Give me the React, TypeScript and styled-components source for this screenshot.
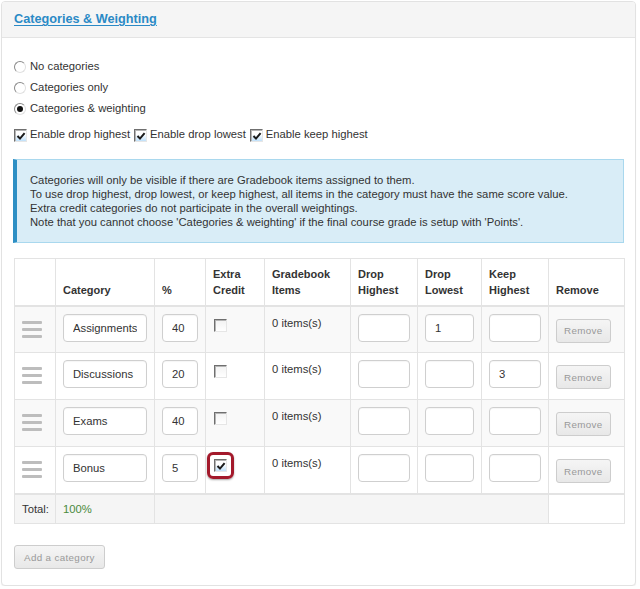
import React from "react";
import styled, { createGlobalStyle } from "styled-components";

const Global = createGlobalStyle`
  html, body { margin: 0; padding: 0; background: #fff; }
  body {
    font-family: "Liberation Sans", Arial, Helvetica, sans-serif;
    font-size: 11.25px;
    color: #333;
  }
  * { box-sizing: border-box; }
`;

const Page = styled.div`
  padding: 1px 4px 0 1px;
`;

const Panel = styled.section`
  width: 635px;
  height: 585px;
  border: 1px solid #e2e2e2;
  border-radius: 4px;
  box-shadow: 0 1px 1px rgba(0, 0, 0, 0.05);
  background: #fff;
  overflow: hidden;
`;

const PanelHeader = styled.header`
  height: 36px;
  background: #f5f5f5;
  border-bottom: 1px solid #e4e4e4;
  display: flex;
  align-items: center;
  padding: 0 0 0 12px;
`;

const Title = styled.a`
  font-size: 12.7px;
  font-weight: bold;
  color: #2b8ac6;
  text-decoration: underline;
  text-underline-offset: 2px;
  cursor: pointer;
  margin-top: -1px;
`;

const PanelBody = styled.div`
  padding: 18px 11px 0 12px;
`;

const OptionList = styled.div`
  display: flex;
  flex-direction: column;
`;

const OptionRow = styled.label`
  display: flex;
  align-items: center;
  height: 21px;
  gap: 4px;
  line-height: 21px;
`;

const Radio = styled.span<{ $on?: boolean }>`
  width: 12px;
  height: 12px;
  border-radius: 50%;
  border: 1px solid;
  border-color: #8a8a8a #e0e0e0 #e0e0e0 #8a8a8a;
  background: #fff;
  display: inline-flex;
  align-items: center;
  justify-content: center;
  flex: none;
  &::after {
    content: "";
    display: ${(p) => (p.$on ? "block" : "none")};
    width: 6px;
    height: 6px;
    border-radius: 50%;
    background: #111;
  }
`;

const CheckLine = styled.div`
  display: flex;
  align-items: center;
  margin-top: 6px;
  height: 18px;
`;

const CheckItem = styled.label`
  display: inline-flex;
  align-items: center;
  gap: 3px;
  margin-right: 4px;
`;

const CheckBox = styled.span<{ $on?: boolean }>`
  width: 13px;
  height: 13px;
  flex: none;
  border: 1px solid;
  border-color: #6f6f6f #e6e6e6 #e6e6e6 #6f6f6f;
  box-shadow: inset 1px 1px 0 #b5b5b5;
  background: ${(p) =>
    p.$on ? "linear-gradient(#ffffff 40%, #bfe0fa 100%)" : "linear-gradient(#f2f2f2, #ffffff)"};
  position: relative;
  display: inline-block;
  margin-top: 3px;
  svg { position: absolute; left: 1px; top: 1px; }
`;

const Check = () => (
  <svg width="10" height="10" viewBox="0 0 10 10">
    <path d="M1.5 5 L4 7.6 L8.6 2.2" fill="none" stroke="#1a1a1a" strokeWidth="2" />
  </svg>
);

const Info = styled.div`
  margin: 16px 0 0 -1px;
  width: 611px;
  background: #d9edf7;
  border: 1px solid #a9d8ee;
  border-left: 4px solid #2d8fc4;
  padding: 13px 12px 13px 13px;
  line-height: 14px;
`;

const Table = styled.table`
  margin-top: 15px;
  width: 610px;
  border-collapse: collapse;
  table-layout: fixed;
  border: 1px solid #e3e3e3;
`;

const HeadCell = styled.th`
  text-align: left;
  vertical-align: bottom;
  font-weight: bold;
  font-size: 11px;
  line-height: 16px;
  height: 47px;
  padding: 0 7px 7px 7px;
  border: 1px solid #e3e3e3;
  border-bottom-width: 2px;
  background: #fff;
`;

const Row = styled.tr<{ $striped?: boolean }>`
  background: ${(p) => (p.$striped ? "#f9f9f9" : "#fff")};
`;

const Cell = styled.td`
  vertical-align: top;
  height: 47px;
  padding: 7px;
  line-height: 16px;
  border: 1px solid #e3e3e3;
`;

const TextCell = styled(Cell)`
  padding-top: 8px;
`;

const TotalRow = styled.tr`
  background: #f5f5f5;
`;

const TotalCell = styled.td<{ $white?: boolean }>`
  height: 30px;
  padding: 0 7px;
  line-height: 16px;
  border: 1px solid #e3e3e3;
  border-top-width: 2px;
  background: ${(p) => (p.$white ? "#fff" : "transparent")};
`;

const Percent = styled.span`
  color: #4a8a3c;
`;

const Handle = styled.svg`
  display: block;
  margin-top: 7px;
`;

const Field = styled.input`
  display: block;
  width: 100%;
  height: 28px;
  border: 1px solid #cfcfcf;
  border-radius: 4px;
  background: #fff;
  padding: 0 9px;
  font: inherit;
  color: #333;
  box-shadow: inset 0 1px 1px rgba(0, 0, 0, 0.04);
  outline: none;
`;

const GhostButton = styled.button<{ $mt?: number; $px?: number }>`
  display: block;
  height: 24px;
  padding: 0 ${(p) => p.$px ?? 7}px;
  margin-top: ${(p) => p.$mt ?? 0}px;
  border: 1px solid #cdcdcd;
  border-radius: 3px;
  background: linear-gradient(#f5f5f5, #e8e8e8);
  color: #999;
  font-family: "Liberation Sans", Arial, sans-serif;
  font-size: 9.8px;
  letter-spacing: 0.35px;
  cursor: default;
`;

const EcBox = styled.span`
  display: inline-block;
  margin: 2px 0 0 1px;
`;

const Highlight = styled.span`
  display: inline-flex;
  align-items: center;
  justify-content: center;
  width: 27px;
  height: 27px;
  margin: -2px 0 0 -6px;
  border: 3px solid #a3192b;
  border-radius: 6px;
  box-shadow: 0 1px 2px rgba(0, 0, 0, 0.35);
  span { margin: 0; }
`;

const Footer = styled.div`
  padding-top: 21px;
`;

const DragHandle = () => (
  <Handle width="20" height="17" viewBox="0 0 20 17">
    <rect x="0" y="0" width="20" height="3" rx="1" fill="#bdbdbd" />
    <rect x="0" y="7" width="20" height="3" rx="1" fill="#bdbdbd" />
    <rect x="0" y="14" width="20" height="3" rx="1" fill="#bdbdbd" />
  </Handle>
);

type Cat = {
  name: string;
  pct: string;
  extra: boolean;
  dh: string;
  dl: string;
  kh: string;
};

const cats: Cat[] = [
  { name: "Assignments", pct: "40", extra: false, dh: "", dl: "1", kh: "" },
  { name: "Discussions", pct: "20", extra: false, dh: "", dl: "", kh: "3" },
  { name: "Exams", pct: "40", extra: false, dh: "", dl: "", kh: "" },
  { name: "Bonus", pct: "5", extra: true, dh: "", dl: "", kh: "" },
];

const widths = [41, 99, 51, 59, 86, 67, 64, 67, 76];

export default function App() {
  return (
    <>
      <Global />
      <Page>
        <Panel>
          <PanelHeader>
            <Title>Categories &amp; Weighting</Title>
          </PanelHeader>
          <PanelBody>
            <OptionList>
              <OptionRow><Radio />No categories</OptionRow>
              <OptionRow><Radio />Categories only</OptionRow>
              <OptionRow><Radio $on />Categories &amp; weighting</OptionRow>
            </OptionList>
            <CheckLine>
              <CheckItem><CheckBox $on><Check /></CheckBox>Enable drop highest</CheckItem>
              <CheckItem><CheckBox $on><Check /></CheckBox>Enable drop lowest</CheckItem>
              <CheckItem><CheckBox $on><Check /></CheckBox>Enable keep highest</CheckItem>
            </CheckLine>
            <Info>
              Categories will only be visible if there are Gradebook items assigned to them.<br />
              To use drop highest, drop lowest, or keep highest, all items in the category must have the same score value.<br />
              Extra credit categories do not participate in the overall weightings.<br />
              Note that you cannot choose 'Categories &amp; weighting' if the final course grade is setup with 'Points'.
            </Info>
            <Table>
              <colgroup>
                {widths.map((w, i) => (
                  <col key={i} style={{ width: w }} />
                ))}
              </colgroup>
              <thead>
                <tr>
                  <HeadCell />
                  <HeadCell>Category</HeadCell>
                  <HeadCell>%</HeadCell>
                  <HeadCell>Extra<br />Credit</HeadCell>
                  <HeadCell>Gradebook<br />Items</HeadCell>
                  <HeadCell>Drop<br />Highest</HeadCell>
                  <HeadCell>Drop<br />Lowest</HeadCell>
                  <HeadCell>Keep<br />Highest</HeadCell>
                  <HeadCell>Remove</HeadCell>
                </tr>
              </thead>
              <tbody>
                {cats.map((c, i) => (
                  <Row key={c.name} $striped={i % 2 === 0}>
                    <Cell><DragHandle /></Cell>
                    <Cell><Field defaultValue={c.name} /></Cell>
                    <Cell><Field defaultValue={c.pct} /></Cell>
                    <Cell>
                      {c.extra ? (
                        <Highlight>
                          <CheckBox $on><Check /></CheckBox>
                        </Highlight>
                      ) : (
                        <EcBox><CheckBox /></EcBox>
                      )}
                    </Cell>
                    <TextCell>0 items(s)</TextCell>
                    <Cell><Field defaultValue={c.dh} /></Cell>
                    <Cell><Field defaultValue={c.dl} /></Cell>
                    <Cell><Field defaultValue={c.kh} /></Cell>
                    <Cell><GhostButton $mt={5}>Remove</GhostButton></Cell>
                  </Row>
                ))}
                <TotalRow>
                  <TotalCell>Total:</TotalCell>
                  <TotalCell><Percent>100%</Percent></TotalCell>
                  <TotalCell colSpan={6} />
                  <TotalCell $white />
                </TotalRow>
              </tbody>
            </Table>
            <Footer>
              <GhostButton $px={9}>Add a category</GhostButton>
            </Footer>
          </PanelBody>
        </Panel>
      </Page>
    </>
  );
}
